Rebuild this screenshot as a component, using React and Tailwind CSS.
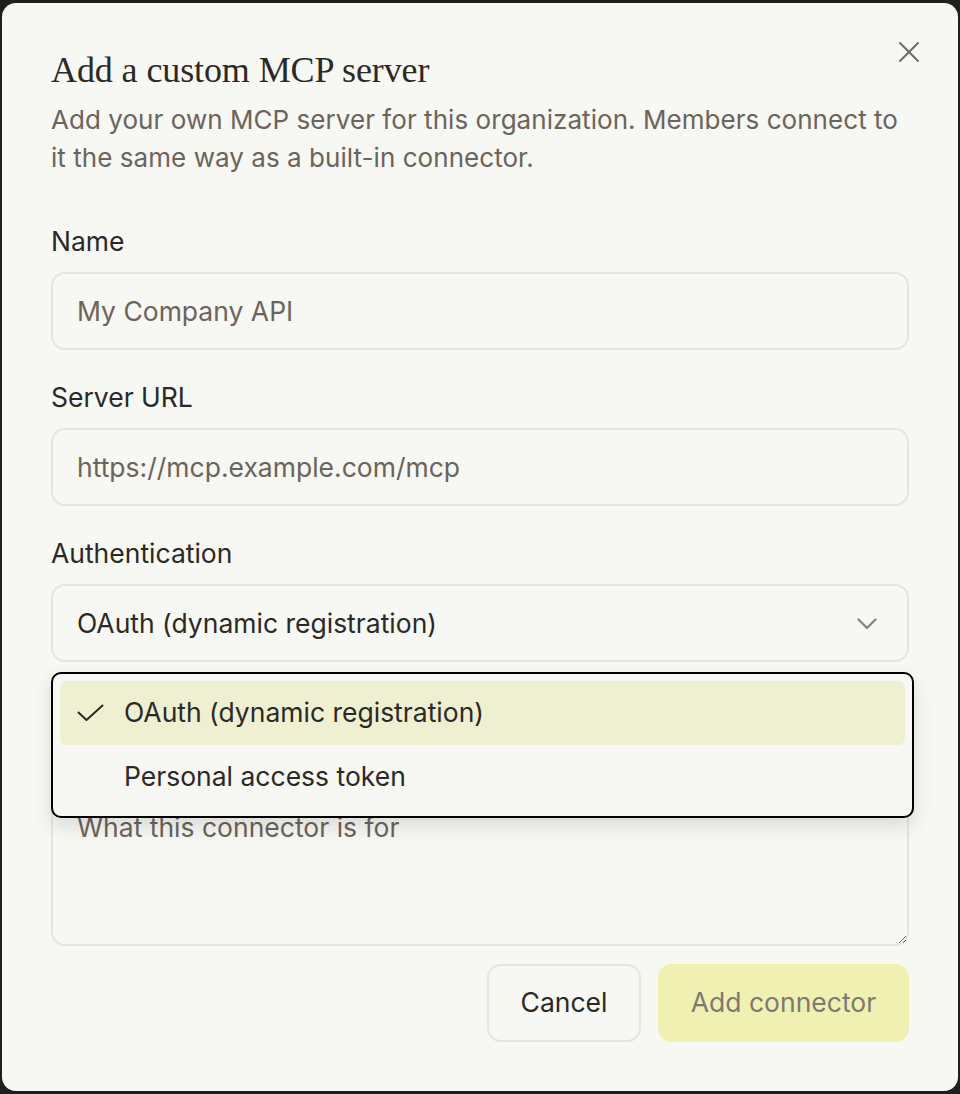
import React from "react";

const sans = { fontFamily: "Inter, 'Noto Sans', sans-serif" };

export default function App() {
  return (
    <div className="min-h-[1094px] bg-[#1f1f1f] px-[2px] pt-[3px] pb-[3px]" style={sans}>
      <div className="relative flex h-[1088px] w-[956px] flex-col rounded-[14px] bg-[#f7f7f3] px-[49px] pt-[47px]">
        <button className="absolute right-[36px] top-[36px] flex h-[26px] w-[26px] items-center justify-center text-[#6f6a64]">
          <svg width="20" height="20" viewBox="0 0 20 20" fill="none" stroke="currentColor" strokeWidth="2" strokeLinecap="round">
            <line x1="1" y1="1" x2="19" y2="19" />
            <line x1="19" y1="1" x2="1" y2="19" />
          </svg>
        </button>

        <h2
          className="h-[40px] text-[36px] leading-[40px] tracking-[-0.1px] text-[#2b2925]"
          style={{ fontFamily: "'Liberation Serif', serif" }}
        >
          Add a custom MCP server
        </h2>
        <p className="mt-[11px] text-[26px] leading-[38px] tracking-[0.05px] text-[#6b645b]">
          Add your own MCP server for this organization. Members connect to it the same way as a built-in connector.
        </p>

        <label className="mt-[48px] block text-[26.5px] leading-[32px] text-[#2b2925]">Name</label>
        <div className="mt-[15px] flex h-[78px] items-center rounded-[14px] border-2 border-[#e7e4de] px-[24px] pt-[2px] text-[26.5px] text-[#6b645b]">
          My Company API
        </div>

        <label className="mt-[31px] block text-[26.5px] leading-[32px] text-[#2b2925]">Server URL</label>
        <div className="mt-[15px] flex h-[78px] items-center rounded-[14px] border-2 border-[#e7e4de] px-[24px] pt-[2px] text-[26.5px] text-[#6b645b]">
          https://mcp.example.com/mcp
        </div>

        <label className="mt-[31px] block text-[26.5px] leading-[32px] text-[#2b2925]">Authentication</label>
        <div className="mt-[15px] flex h-[78px] items-center justify-between rounded-[14px] border-2 border-[#e7e4de] pl-[24px] pr-[30px] pt-[2px] text-[26.5px] text-[#2b2925]">
          <span>OAuth (dynamic registration)</span>
          <svg width="20" height="12" viewBox="0 0 20 12" fill="none" stroke="#8b8780" strokeWidth="2.4" strokeLinecap="round" strokeLinejoin="round">
            <polyline points="1.5,1.5 10,10 18.5,1.5" />
          </svg>
        </div>

        <textarea
          aria-label="Description"
          className="mt-[125px] h-[159px] w-full rounded-[14px] border-2 border-[#e7e4de] bg-transparent px-[24px] pt-[20px] pb-[20px] text-[26.5px] leading-[36px] text-[#2b2925] outline-none placeholder:text-[#6b645b]"
          placeholder="What this connector is for"
          style={sans}
        />

        <div className="mt-[18px] flex justify-end gap-[17px]">
          <button className="h-[78px] w-[154px] rounded-[14px] border-2 border-[#e7e4de] text-[26.5px] text-[#2b2925]">
            Cancel
          </button>
          <button className="h-[78px] w-[251px] rounded-[14px] bg-[#f1f0b3] text-[26.5px] text-[#7b7a72]">
            Add connector
          </button>
        </div>

        <div className="absolute left-[49px] top-[669px] w-[863px] rounded-[10px] border-2 border-black bg-[#f7f7f3] p-[7px] shadow-[0_8px_20px_rgba(0,0,0,0.12)]">
          <div className="flex h-[64px] items-center rounded-[7px] bg-[#efefd1] pl-[17px] text-[26.5px] text-[#2b2925]">
            <svg width="27" height="18" viewBox="0 0 27 18" fill="none" stroke="#2b2925" strokeWidth="2" strokeLinecap="round" strokeLinejoin="round">
              <polyline points="1.5,8.5 9.5,16 25.5,1.5" />
            </svg>
            <span className="ml-[20px]">OAuth (dynamic registration)</span>
          </div>
          <div className="flex h-[64px] items-center pl-[64px] text-[26.5px] text-[#2b2925]">
            Personal access token
          </div>
        </div>
      </div>
    </div>
  );
}
